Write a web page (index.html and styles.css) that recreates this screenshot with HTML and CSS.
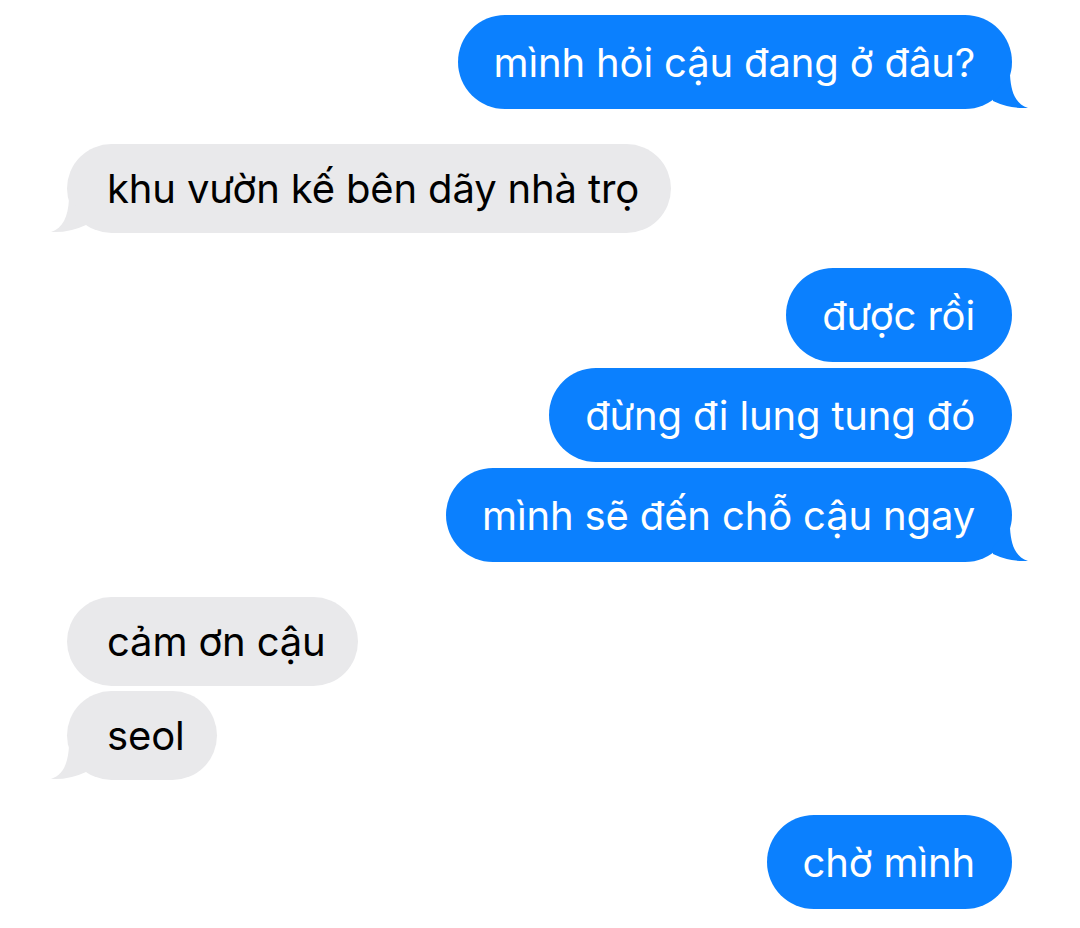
FILE: index.html
```html
<!DOCTYPE html>
<html lang="vi">
<head>
  <meta charset="UTF-8" />
  <meta name="viewport" content="width=device-width, initial-scale=1.0"/>
  <title>Tin nhắn</title>
  <link rel="stylesheet" href="styles.css">
</head>
<body>
  <div class="chat">
    <div class="group sent">
      <div class="bubble">mình hỏi cậu đang ở đâu?
        <svg class="tail" viewBox="0 0 36 34"><path d="M0,20 L18,0 C19,18 24,29 36,33 Q18,34 1,26 Z"/></svg>
      </div>
    </div>

    <div class="group received">
      <div class="bubble">khu vườn kế bên dãy nhà trọ
        <svg class="tail" viewBox="0 0 36 34"><path d="M0,20 L18,0 C19,18 24,29 36,33 Q18,34 1,26 Z"/></svg>
      </div>
    </div>

    <div class="group sent">
      <div class="bubble">được rồi</div>
      <div class="bubble">đừng đi lung tung đó</div>
      <div class="bubble">mình sẽ đến chỗ cậu ngay
        <svg class="tail" viewBox="0 0 36 34"><path d="M0,20 L18,0 C19,18 24,29 36,33 Q18,34 1,26 Z"/></svg>
      </div>
    </div>

    <div class="group received">
      <div class="bubble">cảm ơn cậu</div>
      <div class="bubble">seol
        <svg class="tail" viewBox="0 0 36 34"><path d="M0,20 L18,0 C19,18 24,29 36,33 Q18,34 1,26 Z"/></svg>
      </div>
    </div>

    <div class="group sent">
      <div class="bubble">chờ mình</div>
    </div>
  </div>
</body>
</html>
```

FILE: styles.css
```css
* {
  margin: 0;
  padding: 0;
  box-sizing: border-box;
}

body {
  font-family: Inter, 'Liberation Sans', sans-serif;
  background-color: #fff;
  width: 1080px;
  height: 928px;
  overflow: hidden;
}

.chat {
  display: flex;
  flex-direction: column;
  gap: 35px;
  padding: 15px 68px 0 67px;
}

.group {
  display: flex;
  flex-direction: column;
  gap: 6px;
}

.sent {
  align-items: flex-end;
}

.received {
  align-items: flex-start;
  gap: 5px;
}

.bubble {
  position: relative;
  display: flex;
  align-items: center;
  font-size: 40px;
  letter-spacing: -0.15px;
  border-radius: 47px;
  white-space: nowrap;
}

.sent .bubble {
  height: 94px;
  padding: 0 37px 0 36px;
  background-color: #0b80fe;
  color: #fff;
}

.received .bubble {
  height: 89px;
  padding: 0 32px 0 40px;
  background-color: #e9e9eb;
  color: #000;
}

/* tail drawn over the bottom corner */
.tail {
  position: absolute;
  bottom: 0;
  width: 36px;
  height: 34px;
}

.sent .tail {
  right: -16px;
  fill: #0b80fe;
}

.received .tail {
  left: -16px;
  fill: #e9e9eb;
  transform: scaleX(-1);
}
```
